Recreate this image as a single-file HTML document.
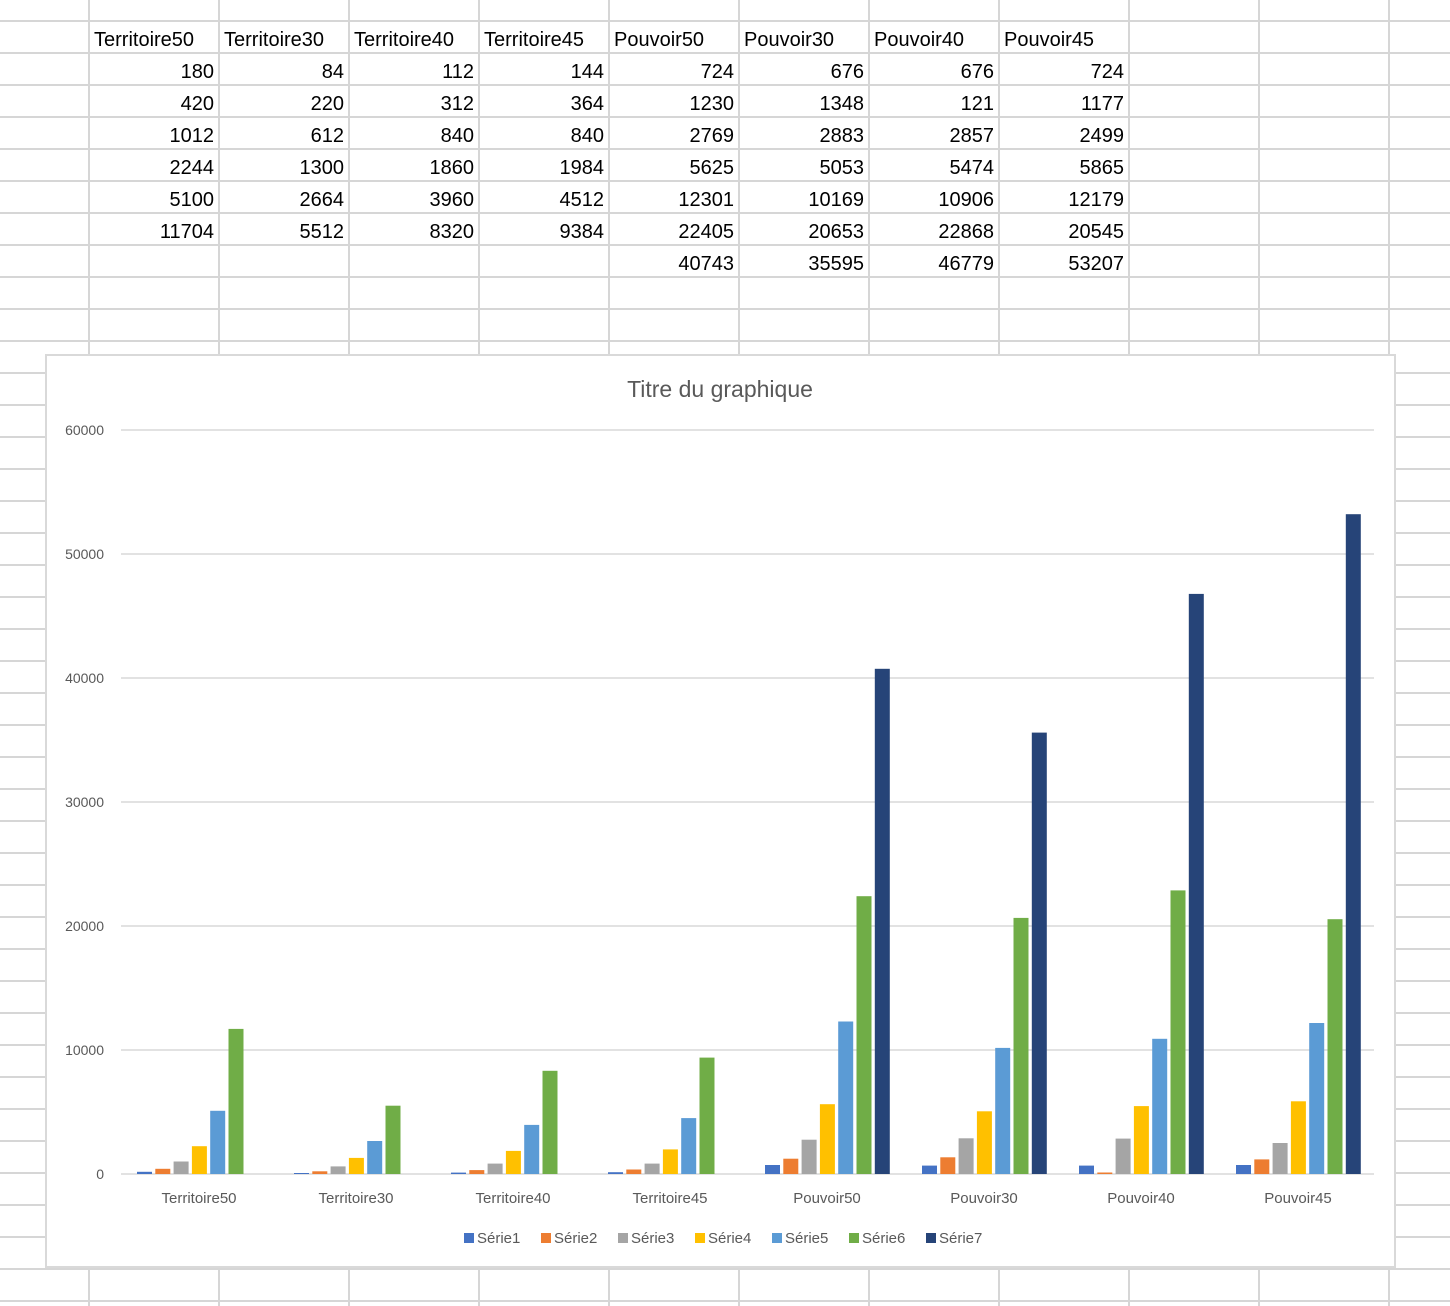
<!DOCTYPE html>
<html><head><meta charset="utf-8"><style>
html,body{margin:0;padding:0;background:#fff;}
svg{display:block;font-family:"Liberation Sans",sans-serif;}
</style></head><body>
<svg width="1450" height="1306" viewBox="0 0 1450 1306" xmlns="http://www.w3.org/2000/svg">
<g stroke="#d6d6d6" stroke-width="2">
<line x1="89" y1="0" x2="89" y2="1306"/><line x1="219" y1="0" x2="219" y2="1306"/><line x1="349" y1="0" x2="349" y2="1306"/><line x1="479" y1="0" x2="479" y2="1306"/><line x1="609" y1="0" x2="609" y2="1306"/><line x1="739" y1="0" x2="739" y2="1306"/><line x1="869" y1="0" x2="869" y2="1306"/><line x1="999" y1="0" x2="999" y2="1306"/><line x1="1129" y1="0" x2="1129" y2="1306"/><line x1="1259" y1="0" x2="1259" y2="1306"/><line x1="1389" y1="0" x2="1389" y2="1306"/>
<line x1="0" y1="21" x2="1450" y2="21"/><line x1="0" y1="53" x2="1450" y2="53"/><line x1="0" y1="85" x2="1450" y2="85"/><line x1="0" y1="117" x2="1450" y2="117"/><line x1="0" y1="149" x2="1450" y2="149"/><line x1="0" y1="181" x2="1450" y2="181"/><line x1="0" y1="213" x2="1450" y2="213"/><line x1="0" y1="245" x2="1450" y2="245"/><line x1="0" y1="277" x2="1450" y2="277"/><line x1="0" y1="309" x2="1450" y2="309"/><line x1="0" y1="341" x2="1450" y2="341"/><line x1="0" y1="373" x2="1450" y2="373"/><line x1="0" y1="405" x2="1450" y2="405"/><line x1="0" y1="437" x2="1450" y2="437"/><line x1="0" y1="469" x2="1450" y2="469"/><line x1="0" y1="501" x2="1450" y2="501"/><line x1="0" y1="533" x2="1450" y2="533"/><line x1="0" y1="565" x2="1450" y2="565"/><line x1="0" y1="597" x2="1450" y2="597"/><line x1="0" y1="629" x2="1450" y2="629"/><line x1="0" y1="661" x2="1450" y2="661"/><line x1="0" y1="693" x2="1450" y2="693"/><line x1="0" y1="725" x2="1450" y2="725"/><line x1="0" y1="757" x2="1450" y2="757"/><line x1="0" y1="789" x2="1450" y2="789"/><line x1="0" y1="821" x2="1450" y2="821"/><line x1="0" y1="853" x2="1450" y2="853"/><line x1="0" y1="885" x2="1450" y2="885"/><line x1="0" y1="917" x2="1450" y2="917"/><line x1="0" y1="949" x2="1450" y2="949"/><line x1="0" y1="981" x2="1450" y2="981"/><line x1="0" y1="1013" x2="1450" y2="1013"/><line x1="0" y1="1045" x2="1450" y2="1045"/><line x1="0" y1="1077" x2="1450" y2="1077"/><line x1="0" y1="1109" x2="1450" y2="1109"/><line x1="0" y1="1141" x2="1450" y2="1141"/><line x1="0" y1="1173" x2="1450" y2="1173"/><line x1="0" y1="1205" x2="1450" y2="1205"/><line x1="0" y1="1237" x2="1450" y2="1237"/><line x1="0" y1="1269" x2="1450" y2="1269"/><line x1="0" y1="1301" x2="1450" y2="1301"/>
</g>
<g font-size="20" fill="#000">
<text x="94" y="46">Territoire50</text><text x="224" y="46">Territoire30</text><text x="354" y="46">Territoire40</text><text x="484" y="46">Territoire45</text><text x="614" y="46">Pouvoir50</text><text x="744" y="46">Pouvoir30</text><text x="874" y="46">Pouvoir40</text><text x="1004" y="46">Pouvoir45</text>
</g>
<g font-size="20" fill="#000" text-anchor="end">
<text x="214" y="78">180</text><text x="344" y="78">84</text><text x="474" y="78">112</text><text x="604" y="78">144</text><text x="734" y="78">724</text><text x="864" y="78">676</text><text x="994" y="78">676</text><text x="1124" y="78">724</text>
<text x="214" y="110">420</text><text x="344" y="110">220</text><text x="474" y="110">312</text><text x="604" y="110">364</text><text x="734" y="110">1230</text><text x="864" y="110">1348</text><text x="994" y="110">121</text><text x="1124" y="110">1177</text>
<text x="214" y="142">1012</text><text x="344" y="142">612</text><text x="474" y="142">840</text><text x="604" y="142">840</text><text x="734" y="142">2769</text><text x="864" y="142">2883</text><text x="994" y="142">2857</text><text x="1124" y="142">2499</text>
<text x="214" y="174">2244</text><text x="344" y="174">1300</text><text x="474" y="174">1860</text><text x="604" y="174">1984</text><text x="734" y="174">5625</text><text x="864" y="174">5053</text><text x="994" y="174">5474</text><text x="1124" y="174">5865</text>
<text x="214" y="206">5100</text><text x="344" y="206">2664</text><text x="474" y="206">3960</text><text x="604" y="206">4512</text><text x="734" y="206">12301</text><text x="864" y="206">10169</text><text x="994" y="206">10906</text><text x="1124" y="206">12179</text>
<text x="214" y="238">11704</text><text x="344" y="238">5512</text><text x="474" y="238">8320</text><text x="604" y="238">9384</text><text x="734" y="238">22405</text><text x="864" y="238">20653</text><text x="994" y="238">22868</text><text x="1124" y="238">20545</text>
<text x="734" y="270">40743</text><text x="864" y="270">35595</text><text x="994" y="270">46779</text><text x="1124" y="270">53207</text>
</g>
<rect x="46" y="355" width="1349" height="912" fill="#fff" stroke="#d9d9d9" stroke-width="2"/>
<text x="720" y="397" font-size="23" fill="#595959" text-anchor="middle">Titre du graphique</text>
<g stroke="#d9d9d9" stroke-width="1.5">
<line x1="121" y1="430" x2="1374" y2="430"/><line x1="121" y1="554" x2="1374" y2="554"/><line x1="121" y1="678" x2="1374" y2="678"/><line x1="121" y1="802" x2="1374" y2="802"/><line x1="121" y1="926" x2="1374" y2="926"/><line x1="121" y1="1050" x2="1374" y2="1050"/><line x1="121" y1="1174" x2="1374" y2="1174"/>
</g>
<g font-size="14" fill="#595959" text-anchor="end">
<text x="104" y="435">60000</text><text x="104" y="559">50000</text><text x="104" y="683">40000</text><text x="104" y="807">30000</text><text x="104" y="931">20000</text><text x="104" y="1055">10000</text><text x="104" y="1179">0</text>
</g>
<g font-size="15" fill="#595959" text-anchor="middle">
<text x="199" y="1203">Territoire50</text><text x="356" y="1203">Territoire30</text><text x="513" y="1203">Territoire40</text><text x="670" y="1203">Territoire45</text><text x="827" y="1203">Pouvoir50</text><text x="984" y="1203">Pouvoir30</text><text x="1141" y="1203">Pouvoir40</text><text x="1298" y="1203">Pouvoir45</text>
</g>
<g transform="translate(137,0)">
<rect x="0" y="1171.8" width="15" height="2.2" fill="#4472C4"/><rect x="18.3" y="1168.8" width="15" height="5.2" fill="#ED7D31"/><rect x="36.6" y="1161.5" width="15" height="12.5" fill="#A5A5A5"/><rect x="54.9" y="1146.2" width="15" height="27.8" fill="#FFC000"/><rect x="73.2" y="1110.8" width="15" height="63.2" fill="#5B9BD5"/><rect x="91.5" y="1028.9" width="15" height="145.1" fill="#70AD47"/>
</g>
<g transform="translate(294,0)">
<rect x="0" y="1173" width="15" height="1" fill="#4472C4"/><rect x="18.3" y="1171.3" width="15" height="2.7" fill="#ED7D31"/><rect x="36.6" y="1166.4" width="15" height="7.6" fill="#A5A5A5"/><rect x="54.9" y="1157.9" width="15" height="16.1" fill="#FFC000"/><rect x="73.2" y="1141" width="15" height="33" fill="#5B9BD5"/><rect x="91.5" y="1105.7" width="15" height="68.3" fill="#70AD47"/>
</g>
<g transform="translate(451,0)">
<rect x="0" y="1172.6" width="15" height="1.4" fill="#4472C4"/><rect x="18.3" y="1170.1" width="15" height="3.9" fill="#ED7D31"/><rect x="36.6" y="1163.6" width="15" height="10.4" fill="#A5A5A5"/><rect x="54.9" y="1150.9" width="15" height="23.1" fill="#FFC000"/><rect x="73.2" y="1124.9" width="15" height="49.1" fill="#5B9BD5"/><rect x="91.5" y="1070.8" width="15" height="103.2" fill="#70AD47"/>
</g>
<g transform="translate(608,0)">
<rect x="0" y="1172.2" width="15" height="1.8" fill="#4472C4"/><rect x="18.3" y="1169.5" width="15" height="4.5" fill="#ED7D31"/><rect x="36.6" y="1163.6" width="15" height="10.4" fill="#A5A5A5"/><rect x="54.9" y="1149.4" width="15" height="24.6" fill="#FFC000"/><rect x="73.2" y="1118.1" width="15" height="55.9" fill="#5B9BD5"/><rect x="91.5" y="1057.6" width="15" height="116.4" fill="#70AD47"/>
</g>
<g transform="translate(765,0)">
<rect x="0" y="1165" width="15" height="9" fill="#4472C4"/><rect x="18.3" y="1158.7" width="15" height="15.3" fill="#ED7D31"/><rect x="36.6" y="1139.7" width="15" height="34.3" fill="#A5A5A5"/><rect x="54.9" y="1104.2" width="15" height="69.8" fill="#FFC000"/><rect x="73.2" y="1021.5" width="15" height="152.5" fill="#5B9BD5"/><rect x="91.5" y="896.2" width="15" height="277.8" fill="#70AD47"/><rect x="109.8" y="668.8" width="15" height="505.2" fill="#264478"/>
</g>
<g transform="translate(922,0)">
<rect x="0" y="1165.6" width="15" height="8.4" fill="#4472C4"/><rect x="18.3" y="1157.3" width="15" height="16.7" fill="#ED7D31"/><rect x="36.6" y="1138.3" width="15" height="35.7" fill="#A5A5A5"/><rect x="54.9" y="1111.3" width="15" height="62.7" fill="#FFC000"/><rect x="73.2" y="1047.9" width="15" height="126.1" fill="#5B9BD5"/><rect x="91.5" y="917.9" width="15" height="256.1" fill="#70AD47"/><rect x="109.8" y="732.6" width="15" height="441.4" fill="#264478"/>
</g>
<g transform="translate(1079,0)">
<rect x="0" y="1165.6" width="15" height="8.4" fill="#4472C4"/><rect x="18.3" y="1172.5" width="15" height="1.5" fill="#ED7D31"/><rect x="36.6" y="1138.6" width="15" height="35.4" fill="#A5A5A5"/><rect x="54.9" y="1106.1" width="15" height="67.9" fill="#FFC000"/><rect x="73.2" y="1038.8" width="15" height="135.2" fill="#5B9BD5"/><rect x="91.5" y="890.4" width="15" height="283.6" fill="#70AD47"/><rect x="109.8" y="593.9" width="15" height="580.1" fill="#264478"/>
</g>
<g transform="translate(1236,0)">
<rect x="0" y="1165" width="15" height="9" fill="#4472C4"/><rect x="18.3" y="1159.4" width="15" height="14.6" fill="#ED7D31"/><rect x="36.6" y="1143" width="15" height="31" fill="#A5A5A5"/><rect x="54.9" y="1101.3" width="15" height="72.7" fill="#FFC000"/><rect x="73.2" y="1023" width="15" height="151" fill="#5B9BD5"/><rect x="91.5" y="919.2" width="15" height="254.8" fill="#70AD47"/><rect x="109.8" y="514.2" width="15" height="659.8" fill="#264478"/>
</g>
<g font-size="15" fill="#595959">
<rect x="464" y="1233" width="10" height="10" fill="#4472C4"/><text x="477" y="1243">Série1</text>
<rect x="541" y="1233" width="10" height="10" fill="#ED7D31"/><text x="554" y="1243">Série2</text>
<rect x="618" y="1233" width="10" height="10" fill="#A5A5A5"/><text x="631" y="1243">Série3</text>
<rect x="695" y="1233" width="10" height="10" fill="#FFC000"/><text x="708" y="1243">Série4</text>
<rect x="772" y="1233" width="10" height="10" fill="#5B9BD5"/><text x="785" y="1243">Série5</text>
<rect x="849" y="1233" width="10" height="10" fill="#70AD47"/><text x="862" y="1243">Série6</text>
<rect x="926" y="1233" width="10" height="10" fill="#264478"/><text x="939" y="1243">Série7</text>
</g>
</svg>
</body></html>
